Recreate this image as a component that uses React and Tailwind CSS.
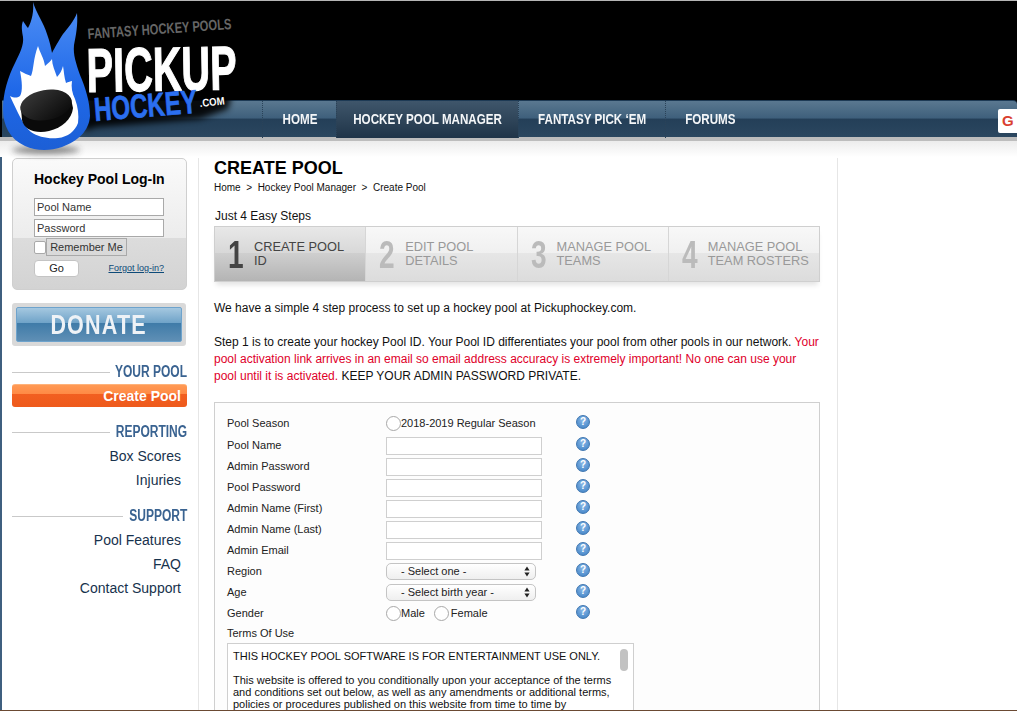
import React from "react";

const navItems = [
  { label: "HOME", width: "w-[74px]" },
  { label: "HOCKEY POOL MANAGER", width: "w-[182px]", active: true },
  { label: "FANTASY PICK ‘EM", width: "w-[147px]" },
  { label: "FORUMS", width: "w-[90px]" },
];

const steps = [
  { n: "1", lines: ["CREATE POOL", "ID"], active: true },
  { n: "2", lines: ["EDIT POOL", "DETAILS"] },
  { n: "3", lines: ["MANAGE POOL", "TEAMS"] },
  { n: "4", lines: ["MANAGE POOL", "TEAM ROSTERS"] },
];

const textRows = ["Pool Name", "Admin Password", "Pool Password", "Admin Name (First)", "Admin Name (Last)", "Admin Email"];

function Logo() {
  return (
    <svg className="absolute left-0 top-0 z-10" width="245" height="160" viewBox="0 0 245 160">
      <defs>
        <linearGradient id="flame" x1="0" y1="0" x2="0" y2="1">
          <stop offset="0" stopColor="#4d8ef5" />
          <stop offset="0.6" stopColor="#1f68e8" />
          <stop offset="1" stopColor="#1c5fd6" />
        </linearGradient>
        <linearGradient id="puck" x1="0" y1="0" x2="1" y2="1">
          <stop offset="0" stopColor="#3c3c3c" />
          <stop offset="1" stopColor="#050505" />
        </linearGradient>
        <filter id="blur" x="-30%" y="-100%" width="160%" height="300%">
          <feGaussianBlur stdDeviation="3" />
        </filter>
      </defs>
      <ellipse cx="46" cy="149" rx="34" ry="4" fill="#333" opacity="0.6" filter="url(#blur)" />
      <path d="M84 92L232 92L228 108L200 118L96 126L84 130Z" fill="#000000" opacity="0.9" filter="url(#blur)" />
      <path
        fill="url(#flame)"
        d="M33 1C36 12 44 22 47 33C50 41 51 47 52 52C55 46 58 41 63 33C68 27 74 20 77 12C78 24 76 34 74 44C73 54 76 62 80 74C85 86 90 100 90 115C89 130 78 140 62 146C50 150 36 150 25 145C10 138 3 125 3 108C3 92 8 76 15 62C20 52 24 44 23 36C22 30 21 25 23 20C25 23 27 26 28 27C32 20 34 10 33 1Z"
      />
      <path
        fill="#ffffff"
        d="M38 45C40 52 44 57 45 65C48 62 51 60 52 58C52 64 55 70 57 76C60 73 62 69 63 65C64 70 64 76 66 82C68 81 71 80 72 80C71 86 72 92 75 98C78 106 79 114 78 122C75 130 68 136 58 137C48 138 38 136 31 131C23 124 18 112 10 95C14 97 17 97 20 95C23 90 22 80 20 70C24 72 28 74 31 75C34 68 33 58 38 45Z"
      />
      <path fill="#0a0a0a" d="M21 108L22 119C24 129 36 133 49 130C62 127 72 118 73 107L71 98Z" />
      <ellipse cx="46" cy="104" rx="26" ry="15" transform="rotate(-10 46 104)" fill="url(#puck)" />
      <g fontFamily="'Liberation Sans', Arial, sans-serif" fontWeight="700">
        <text x="88" y="38" transform="rotate(-4 88 38)" fontSize="15" textLength="144" lengthAdjust="spacingAndGlyphs" fill="#666666">FANTASY HOCKEY POOLS</text>
        <text x="87" y="91" transform="rotate(-1 87 91)" fontSize="62" textLength="150" lengthAdjust="spacingAndGlyphs" fill="#ffffff" stroke="#ffffff" strokeWidth="1.2">PICKUP</text>
        <text x="95" y="120" transform="rotate(-4.6 95 120)" fontSize="33" textLength="103" lengthAdjust="spacingAndGlyphs" fill="#2b6ff0" stroke="#2b6ff0" strokeWidth="0.7">HOCKEY</text>
        <text x="200" y="106" transform="rotate(-6 200 106)" fontSize="11" textLength="25" lengthAdjust="spacingAndGlyphs" fill="#ffffff">.COM</text>
      </g>
    </svg>
  );
}

function Help() {
  return (
    <span className="mb-[3px] flex h-[14px] w-[14px] items-center justify-center rounded-full border border-[#3f76b0] bg-[radial-gradient(circle_at_50%_35%,#8ab8e6,#3b7fc4)] text-[10px] font-bold leading-none text-white">
      ?
    </span>
  );
}

function Radio({ className = "" }) {
  return <span className={`h-[15px] w-[15px] shrink-0 rounded-full border border-[#a8a8a8] bg-white ${className}`} />;
}

function FormRow({ label, children, height = "h-[21px]" }) {
  return (
    <div className={`flex items-center ${height}`}>
      <span className="w-[158px] shrink-0 text-[11px] text-[#222]">{label}</span>
      <div className="flex w-[191px] shrink-0 items-center pl-px text-[11px] text-[#222]">{children}</div>
      <Help />
    </div>
  );
}

function SelectBox({ label }) {
  return (
    <div className="flex h-[17px] w-[150px] items-center justify-between rounded-[5px] border border-[#c4c4c4] bg-[linear-gradient(#ffffff,#efefef)] pl-[14px] pr-[5px] text-[11px] text-[#222]">
      <span>{label}</span>
      <svg width="6" height="11" viewBox="0 0 6 11">
        <path d="M3 0.5L5.6 4.4H0.4Z M3 10.5L0.4 6.6H5.6Z" fill="#222" />
      </svg>
    </div>
  );
}

// text is squeezed to look condensed, so the slot width is set by hand
function SideHeading({ children, width }) {
  return (
    <div className="flex items-center gap-[5px]">
      <span className="h-px flex-1 bg-[#c9c9c9]" />
      <span className={`flex justify-end ${width}`}>
        <span className="origin-right scale-x-[0.75] whitespace-nowrap text-[16px] font-bold leading-[18px] text-[#3a6391]">{children}</span>
      </span>
    </div>
  );
}

function SideLink({ children }) {
  return <div className="pr-[6px] text-right text-[14px] leading-[24px] text-[#17324d]">{children}</div>;
}

function Sidebar() {
  return (
    <aside className="w-[175px] shrink-0">
      <div className="h-[132px] rounded-[5px] border border-[#cfcfcf] bg-[linear-gradient(#fafafa,#ececec_61%,#dcdcdc_61%,#d3d3d3)] pl-[21px] pr-[22px] pt-[11px]">
        <div className="whitespace-nowrap text-[14px] font-bold leading-[18px] text-black">Hockey Pool Log-In</div>
        <input readOnly value="Pool Name" className="mt-[10px] block h-[18px] w-[130px] border border-[#a9a9a9] bg-white px-[2px] text-[11px] text-[#333]" />
        <input readOnly value="Password" className="mt-[3px] block h-[18px] w-[130px] border border-[#a9a9a9] bg-white px-[2px] text-[11px] text-[#333]" />
        <div className="mt-px flex items-center">
          <span className="h-[13px] w-[12px] rounded-[2px] border border-[#a9a9a9] bg-white" />
          <span className="flex h-[18px] w-[81px] items-center justify-center border border-[#a9a9a9] text-[11px] text-[#333]">Remember Me</span>
        </div>
        <div className="mt-[4px] flex items-center justify-between">
          <span className="flex h-[17px] w-[45px] items-center justify-center rounded-[4px] border border-[#c4c4c4] bg-white text-[11px] text-[#222]">Go</span>
          <span className="text-[9px] text-[#0d4a78] underline">Forgot log-in?</span>
        </div>
      </div>
      <div className="mt-[13px] h-[43px] w-[174px] rounded-[3px] bg-[#d9d9d9] p-[4px]">
        <div className="flex h-[35px] items-center justify-center rounded-[2px] border border-[#6ea3cc] bg-[linear-gradient(#a5c8e0,#6fa3c8_45%,#3f7ba8_46%,#5f8fb5)]">
          <span className="scale-x-[0.77] text-[28px] font-bold tracking-[1.5px] text-[#eef2f6]">DONATE</span>
        </div>
      </div>
      <div className="mt-[17px]">
        <SideHeading width="w-[72px]">YOUR POOL</SideHeading>
      </div>
      <div className="mt-[3px] flex h-[23px] items-center justify-end rounded-[3px] border-t border-[#ffb27a] bg-[linear-gradient(#ff9a55,#ff8a45_40%,#f25f20_42%,#ee5a1c)] pr-[6px] text-[14px] font-bold text-white">
        Create Pool
      </div>
      <div className="mt-[16px]">
        <SideHeading width="w-[72px]">REPORTING</SideHeading>
      </div>
      <div className="mt-[3px]">
        <SideLink>Box Scores</SideLink>
        <SideLink>Injuries</SideLink>
      </div>
      <div className="mt-[15px]">
        <SideHeading width="w-[59px]">SUPPORT</SideHeading>
      </div>
      <div className="mt-[3px]">
        <SideLink>Pool Features</SideLink>
        <SideLink>FAQ</SideLink>
        <SideLink>Contact Support</SideLink>
      </div>
    </aside>
  );
}

function Steps() {
  return (
    <div className="flex h-[56px] w-[606px] border border-[#cfcfcf] shadow-[0_5px_5px_-2px_#e4e4e4]">
      {steps.map((s) => (
        <div
          key={s.n}
          className={`flex flex-1 items-center border-r border-[#d6d6d6] pl-[11px] last:border-r-0 ${
            s.active
              ? "bg-[linear-gradient(#e8e8e8,#d8d8d8_48%,#cfcfcf_48%,#b4b4b4)]"
              : "bg-[linear-gradient(#f8f8f8,#f0f0f0_48%,#e6e6e6_48%,#dcdcdc)]"
          }`}
        >
          <span className="w-[28px] shrink-0 pl-[2px]">
            <span className={`block origin-left scale-x-[0.72] text-[39px] font-bold leading-none ${s.active ? "text-[#444]" : "text-[#bbb]"}`}>{s.n}</span>
          </span>
          <span className={`whitespace-nowrap text-[12.8px] leading-[14px] ${s.active ? "text-[#444]" : "text-[#999]"}`}>
            {s.lines[0]}
            <br />
            {s.lines[1]}
          </span>
        </div>
      ))}
    </div>
  );
}

function PoolForm() {
  return (
    <div className="mt-[17px] w-[606px] border border-[#cfcfcf] bg-[#fdfdfd] pl-[12px] pt-[9px]">
      <FormRow label="Pool Season" height="h-[23px]">
        <Radio />
        <span>2018-2019 Regular Season</span>
      </FormRow>
      {textRows.map((label) => (
        <FormRow key={label} label={label}>
          <span className="h-[18px] w-[156px] border border-[#cfcfcf] bg-white" />
        </FormRow>
      ))}
      <FormRow label="Region"><SelectBox label="- Select one -" /></FormRow>
      <FormRow label="Age"><SelectBox label="- Select birth year -" /></FormRow>
      <FormRow label="Gender">
        <Radio />
        <span>Male</span>
        <Radio className="ml-[9px]" />
        <span className="ml-[2px]">Female</span>
      </FormRow>
      <div className="h-[19px] text-[11px] leading-[19px] text-[#222]">Terms Of Use</div>
      <div className="relative h-[120px] w-[407px] overflow-hidden border border-[#cfcfcf] bg-white pl-[5px] pr-[20px] pt-[6px] text-[11px] leading-[12px] text-[#111]">
        <p>THIS HOCKEY POOL SOFTWARE IS FOR ENTERTAINMENT USE ONLY.</p>
        <p className="mt-[12px]">
          This website is offered to you conditionally upon your acceptance of the terms and conditions set out below, as well as any amendments or additional terms, policies or procedures published on this website from time to time by
        </p>
        <span className="absolute right-[5px] top-[5px] h-[22px] w-[8px] rounded-full bg-[#c2c2c2]" />
      </div>
    </div>
  );
}

export default function App() {
  return (
    <div className="relative h-[711px] overflow-hidden border-b border-t border-b-[#6b4a33] border-t-[#b5b5b5] bg-white font-['Liberation_Sans',Arial,sans-serif]">
      <Logo />
      <header className="h-[136px] bg-black pt-[99px]">
        <nav className="ml-[2px] flex h-[38px] rounded-tr-[4px] border-t border-[#1d3a55] bg-[linear-gradient(#5a7890,#3f607c_45%,#243f58_50%,#2b4760)] pl-[260px]">
          {navItems.map((item) => (
            <div
              key={item.label}
              className={`flex items-center justify-center border-l border-dotted border-[#2a4258] ${item.width} ${
                item.active ? "bg-[linear-gradient(#3f566b,#1f3448)]" : ""
              }`}
            >
              <span className="scale-x-[0.83] whitespace-nowrap text-[14px] font-bold text-[#f4f6f8]">{item.label}</span>
            </div>
          ))}
          <div className="ml-auto mt-[8px] flex h-[24px] w-[19px] items-center rounded-l-[2px] bg-white pl-[4px] text-[15px] font-bold text-[#d9402f]">
            G
          </div>
        </nav>
      </header>
      <div className="h-[4px] bg-[#bdbdbd]" />
      <div className="h-[16px] bg-[linear-gradient(#ececec,#ffffff)]" />
      <div className="flex min-h-0 border-l-[2px] border-l-[#3f5f7f] pl-[10px] pt-px">
        <Sidebar />
        <main className="ml-[11px] h-[560px] w-[640px] shrink-0 border-l border-r border-[#e6e6e6] pl-[15px]">
          <h1 className="text-[18px] font-bold leading-[20px] text-black">CREATE POOL</h1>
          <div className="mt-[3px] text-[10px] leading-[14px] text-[#111]">Home &nbsp;&gt;&nbsp; Hockey Pool Manager &nbsp;&gt;&nbsp; Create Pool</div>
          <div className="mt-[14px] pl-px text-[12px] leading-[14px] text-[#111]">Just 4 Easy Steps</div>
          <div className="mt-[3px]"><Steps /></div>
          <div className="mt-[18px] w-[606px] text-[12px] leading-[17px] text-[#111]">
            <p>We have a simple 4 step process to set up a hockey pool at Pickuphockey.com.</p>
            <p className="mt-[17px]">
              Step 1 is to create your hockey Pool ID. Your Pool ID differentiates your pool from other pools in our network.{" "}
              <span className="text-[#e0002a]">
                Your pool activation link arrives in an email so email address accuracy is extremely important! No one can use your pool until it is activated.
              </span>{" "}
              KEEP YOUR ADMIN PASSWORD PRIVATE.
            </p>
          </div>
          <PoolForm />
        </main>
      </div>
    </div>
  );
}
